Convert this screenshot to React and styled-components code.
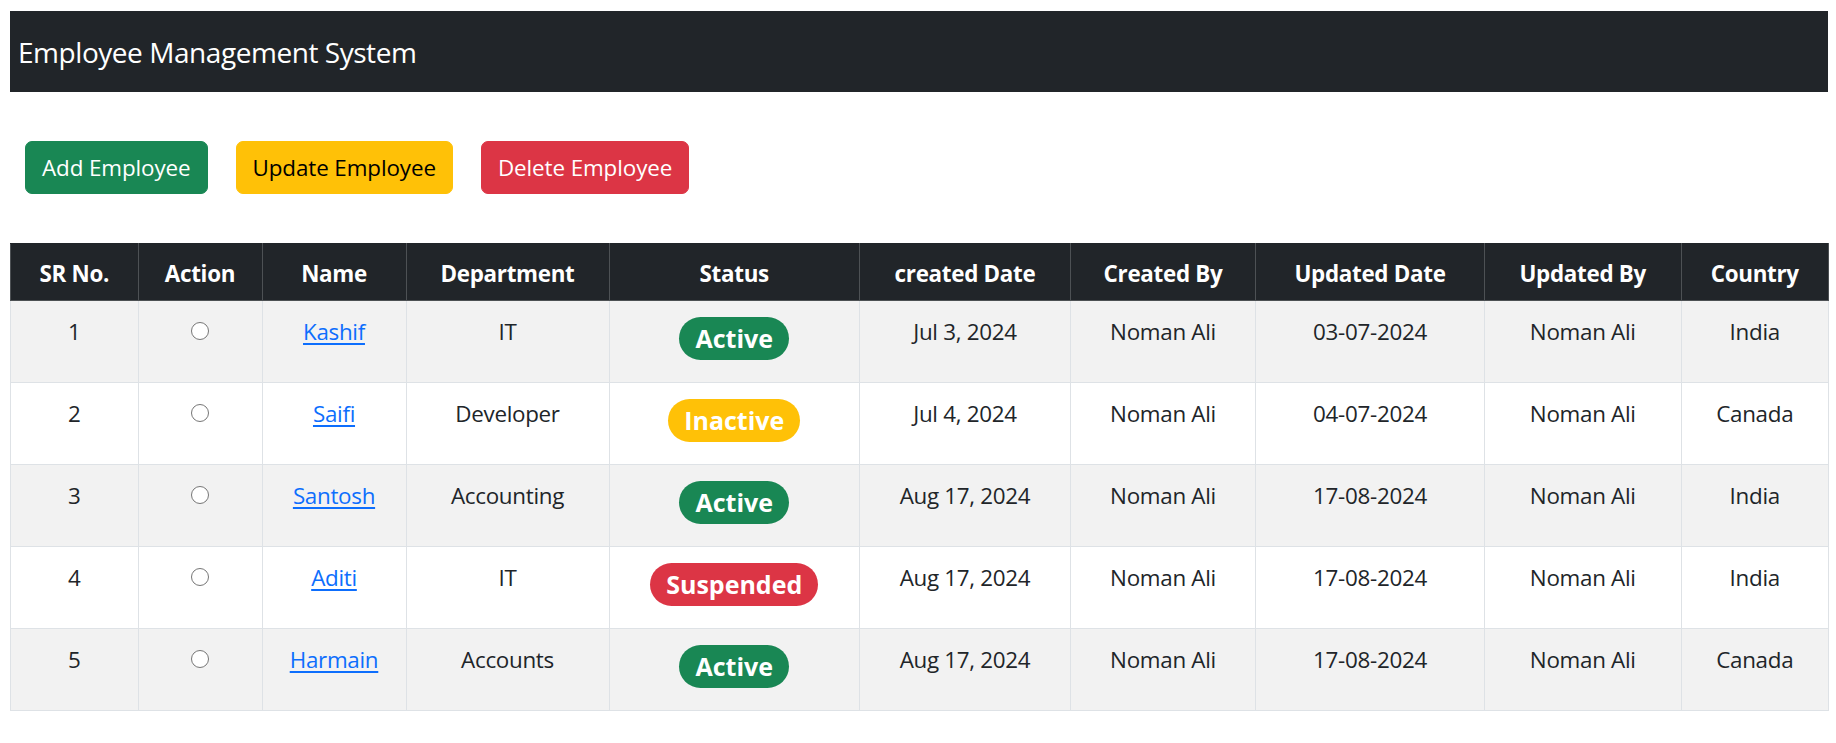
import React from 'react';
import styled, { createGlobalStyle } from 'styled-components';

const colors = {
  dark: '#212529',
  green: '#198754',
  yellow: '#ffc107',
  red: '#dc3545',
  link: '#0d6efd',
  border: '#dee2e6',
  stripe: '#f2f2f2'
};

const GlobalStyle = createGlobalStyle`
  body {
    margin: 0;
    background: #fff;
    color: ${colors.dark};
    font-family: "Open Sans", "Noto Sans", sans-serif;
  }
`;

const Page = styled.div`
  padding: 11px 8px 0 10px;
`;

const TitleBar = styled.header`
  background: ${colors.dark};
  height: 81px;
  display: flex;
  align-items: center;
  padding-left: 8px;
`;

const Title = styled.h1`
  margin: 0;
  color: #fff;
  font-size: 28px;
  font-weight: 400;
  letter-spacing: -0.45px;
`;

const Toolbar = styled.div`
  display: flex;
  gap: 28px;
  margin: 49px 0 49px 15px;
`;

const buttonTones = {
  green: { bg: colors.green, fg: '#fff' },
  yellow: { bg: colors.yellow, fg: '#000' },
  red: { bg: colors.red, fg: '#fff' }
};

const ActionButton = styled.button`
  height: 53px;
  padding: 0 16px;
  border: 1px solid ${props => buttonTones[props.tone].bg};
  border-radius: 7px;
  background: ${props => buttonTones[props.tone].bg};
  color: ${props => buttonTones[props.tone].fg};
  font-family: inherit;
  font-size: 22.4px;
  letter-spacing: -0.1px;
  cursor: pointer;
`;

const Table = styled.table`
  width: 100%;
  table-layout: fixed;
  border-collapse: collapse;
  font-size: 22.4px;
  line-height: 1.5;
  text-align: center;
`;

const HeadCell = styled.th`
  background: ${colors.dark};
  color: #fff;
  font-weight: 700;
  letter-spacing: -0.3px;
  padding: 13px 11px 9px;
  border: 1px solid #4d5154;
  border-top-color: ${colors.dark};
`;

const Row = styled.tr`
  height: 82px;
  background: ${props => (props.striped ? colors.stripe : '#fff')};
`;

const Cell = styled.td`
  vertical-align: top;
  padding: 14px 11px 8px;
  border: 1px solid ${colors.border};
  letter-spacing: -0.3px;
`;

const NameLink = styled.a`
  color: ${colors.link};
  text-decoration: underline;
  text-underline-offset: 3px;
`;

const RadioDot = styled.input.attrs({ type: 'radio', name: 'employee' })`
  appearance: none;
  width: 18px;
  height: 18px;
  margin: 7px 0 0;
  border: 1px solid #767676;
  border-radius: 50%;
  background: #fff;
  vertical-align: top;
`;

const badgeTones = {
  Active: { bg: colors.green, fg: '#fff' },
  Inactive: { bg: colors.yellow, fg: '#fff' },
  Suspended: { bg: colors.red, fg: '#fff' }
};

const StatusBadge = styled.span`
  display: inline-block;
  margin-top: 2px;
  padding: 9px 16px;
  border-radius: 50rem;
  background: ${props => badgeTones[props.status].bg};
  color: ${props => badgeTones[props.status].fg};
  font-size: 25px;
  font-weight: 700;
  letter-spacing: 0;
  line-height: 1;
`;

const columns = [
  ['SR No.', 127.5],
  ['Action', 124],
  ['Name', 144],
  ['Department', 203],
  ['Status', 250.5],
  ['created Date', 211],
  ['Created By', 185],
  ['Updated Date', 229],
  ['Updated By', 196.5],
  ['Country', 147.5]
];

const employees = [
  { id: 1, name: 'Kashif', dept: 'IT', status: 'Active', created: 'Jul 3, 2024', updated: '03-07-2024', country: 'India' },
  { id: 2, name: 'Saifi', dept: 'Developer', status: 'Inactive', created: 'Jul 4, 2024', updated: '04-07-2024', country: 'Canada' },
  { id: 3, name: 'Santosh', dept: 'Accounting', status: 'Active', created: 'Aug 17, 2024', updated: '17-08-2024', country: 'India' },
  { id: 4, name: 'Aditi', dept: 'IT', status: 'Suspended', created: 'Aug 17, 2024', updated: '17-08-2024', country: 'India' },
  { id: 5, name: 'Harmain', dept: 'Accounts', status: 'Active', created: 'Aug 17, 2024', updated: '17-08-2024', country: 'Canada' }
];

const App = () => {
  return (
    <Page>
      <GlobalStyle />
      <TitleBar>
        <Title>Employee Management System</Title>
      </TitleBar>
      <Toolbar>
        <ActionButton tone="green">Add Employee</ActionButton>
        <ActionButton tone="yellow">Update Employee</ActionButton>
        <ActionButton tone="red">Delete Employee</ActionButton>
      </Toolbar>
      <Table>
        <colgroup>
          {columns.map(([label, width]) => (
            <col key={label} style={{ width }} />
          ))}
        </colgroup>
        <thead>
          <tr>
            {columns.map(([label]) => (
              <HeadCell key={label}>{label}</HeadCell>
            ))}
          </tr>
        </thead>
        <tbody>
          {employees.map((emp, i) => (
            <Row key={emp.id} striped={i % 2 === 0}>
              <Cell>{emp.id}</Cell>
              <Cell>
                <RadioDot />
              </Cell>
              <Cell>
                <NameLink href="#">{emp.name}</NameLink>
              </Cell>
              <Cell>{emp.dept}</Cell>
              <Cell>
                <StatusBadge status={emp.status}>{emp.status}</StatusBadge>
              </Cell>
              <Cell>{emp.created}</Cell>
              <Cell>Noman Ali</Cell>
              <Cell>{emp.updated}</Cell>
              <Cell>Noman Ali</Cell>
              <Cell>{emp.country}</Cell>
            </Row>
          ))}
        </tbody>
      </Table>
    </Page>
  );
};

export default App;
